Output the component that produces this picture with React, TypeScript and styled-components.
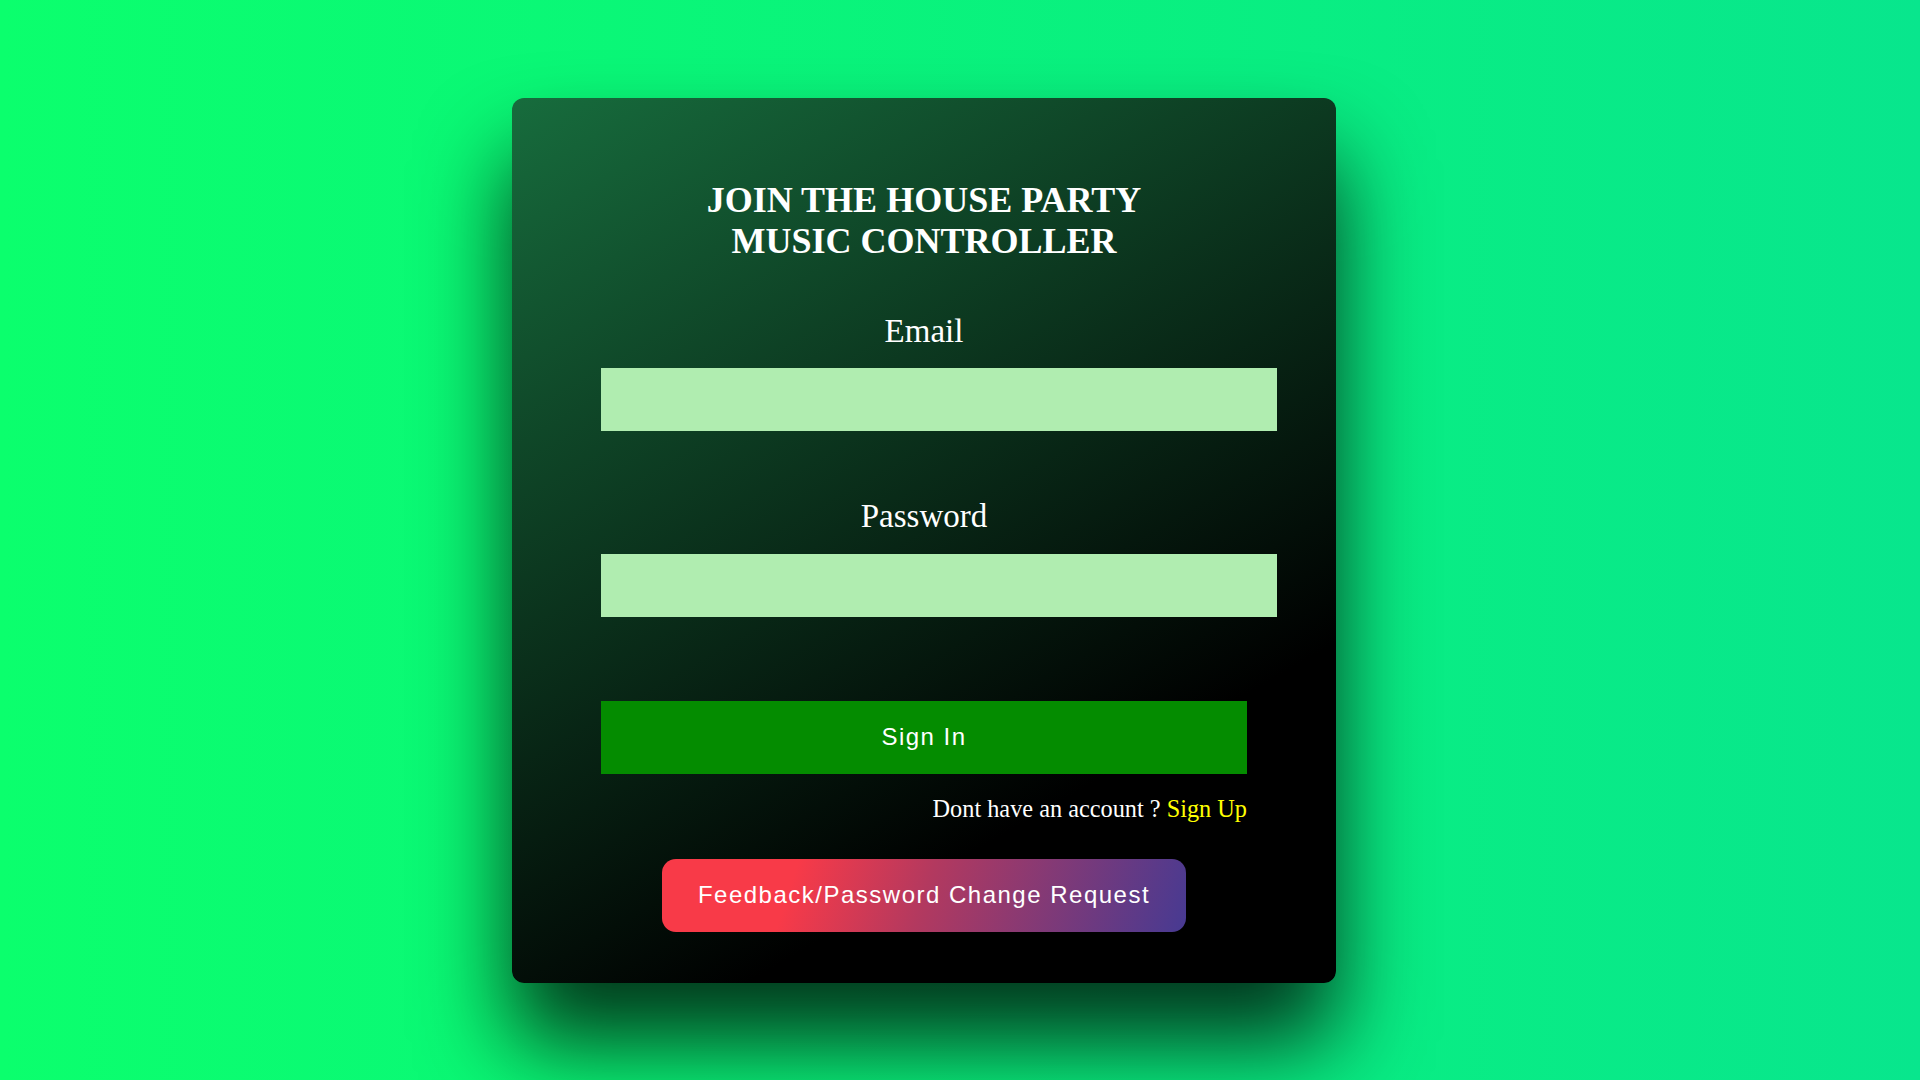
import { FunctionComponent } from "react";
import styled, { createGlobalStyle } from "styled-components";

const GlobalStyle = createGlobalStyle`
  html, body {
    margin: 0;
    padding: 0;
    height: 100%;
  }
  body {
    background: linear-gradient(90deg, #0bff6d 0%, #08e68d 100%);
    font-family: "Liberation Serif", "Times New Roman", serif;
    overflow: hidden;
  }
`;

const Page = styled.div`
  box-sizing: border-box;
  display: flex;
  justify-content: center;
  align-items: flex-start;
  width: 100%;
  min-height: 1080px;
  padding: 98px 72px 0 0;
`;

const Card = styled.div`
  box-sizing: border-box;
  display: flex;
  flex-direction: column;
  width: 824px;
  height: 885px;
  padding: 82px 89px 0;
  border-radius: 12px;
  background: linear-gradient(150deg, #176c3d 0%, #000 75%);
  box-shadow: 0 60px 90px rgba(0, 0, 0, 0.78);
`;

const Title = styled.h1`
  margin: 0;
  color: #fff;
  font-size: 36px;
  font-weight: 700;
  line-height: 1.15;
  text-align: center;
  text-transform: uppercase;
`;

const Label = styled.label<{ $top: number }>`
  display: block;
  margin-top: ${(p) => p.$top}px;
  color: #fff;
  font-size: 33px;
  line-height: 1.15;
  text-align: center;
`;

const Input = styled.input<{ $gap: number }>`
  box-sizing: content-box;
  display: block;
  width: 100%;
  height: 63px;
  margin: ${(p) => p.$gap}px 0 0;
  padding: 0 15px;
  border: none;
  outline: none;
  background: #b0edb0;
  font-family: "Liberation Sans", Arial, sans-serif;
  font-size: 22px;
`;

const SignInButton = styled.button`
  width: 100%;
  height: 73px;
  margin-top: 84px;
  border: none;
  background: #048c00;
  color: #fff;
  font-family: "Liberation Sans", Arial, sans-serif;
  font-size: 24px;
  letter-spacing: 1.5px;
  cursor: pointer;
`;

const SignUpLine = styled.p`
  margin: 21px 0 0;
  color: #fff;
  font-size: 24.3px;
  line-height: 1.15;
  text-align: right;
`;

const SignUpLink = styled.a`
  color: #ffff00;
  text-decoration: none;
  cursor: pointer;
`;

const FeedbackButton = styled.button`
  align-self: center;
  height: 73px;
  margin-top: 36px;
  padding: 0 36px;
  border: none;
  border-radius: 14px;
  background: linear-gradient(108deg, #f83a48 25%, #b3395f 50%, #473a92 100%);
  color: #fff;
  font-family: "Liberation Sans", Arial, sans-serif;
  font-size: 24px;
  letter-spacing: 1.5px;
  cursor: pointer;
`;

const App: FunctionComponent = () => {
  return (
    <>
      <GlobalStyle />
      <Page>
        <Card>
          <Title>
            Join the House Party
            <br />
            Music Controller
          </Title>

          <Label $top={50} htmlFor="email">Email</Label>
          <Input $gap={17} id="email" type="email" />

          <Label $top={67} htmlFor="password">Password</Label>
          <Input $gap={18} id="password" type="password" />

          <SignInButton>Sign In</SignInButton>

          <SignUpLine>
            Dont have an account ? <SignUpLink>Sign Up</SignUpLink>
          </SignUpLine>

          <FeedbackButton>Feedback/Password Change Request</FeedbackButton>
        </Card>
      </Page>
    </>
  );
};

export default App;
